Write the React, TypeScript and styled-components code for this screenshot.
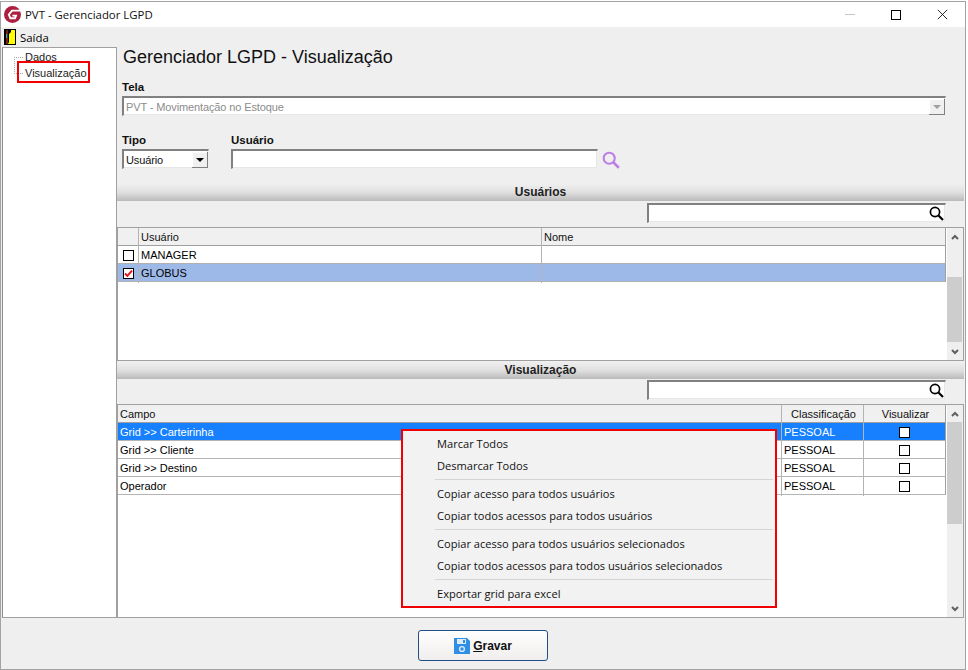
import React, { FC } from 'react'
import styled, { createGlobalStyle } from 'styled-components'

const GlobalStyle = createGlobalStyle`
  html, body {
    margin: 0;
    padding: 0;
    background: #fff;
  }
  body {
    font-family: "Liberation Sans", Arial, sans-serif;
    font-size: 11px;
    color: #000;
  }
  * {
    box-sizing: border-box;
  }
`

const menuGroups = [
  ['Marcar Todos', 'Desmarcar Todos'],
  ['Copiar acesso para todos usuários', 'Copiar todos acessos para todos usuários'],
  ['Copiar acesso para todos usuários selecionados', 'Copiar todos acessos para todos usuários selecionados'],
  ['Exportar grid para excel'],
]

const users = [
  { login: 'MANAGER', checked: false, selected: false },
  { login: 'GLOBUS', checked: true, selected: true },
]

const fields = ['Grid >> Carteirinha', 'Grid >> Cliente', 'Grid >> Destino', 'Operador']

const Logo: FC = () => (
  <svg width="17" height="17" viewBox="0 0 17 17">
    <circle cx="8.5" cy="8.5" r="8.5" fill="#ad1f3e" />
    <path d="M17 4.6H8L4.8 8.6l1.6 3.6H11l1-2.6H8.4" fill="none" stroke="#fff" strokeWidth="1.9" />
  </svg>
)

const DoorIcon: FC = () => (
  <svg width="12" height="16" viewBox="0 0 12 16">
    <rect width="12" height="16" fill="#000" />
    <rect x="4" y="1" width="7" height="14" fill="#ffff00" />
    <path d="M2 1h2v14H2z" fill="#7a1f1f" />
    <path d="M4 1h3v2l-2 2v8l-1 2z" fill="#000" />
    <rect x="2" y="5" width="1" height="4" fill="#19b5c8" />
  </svg>
)

const SearchGlyph: FC<{ color?: string; size?: number }> = ({ color = '#000', size = 15 }) => (
  <svg width={size} height={size} viewBox="0 0 15 15">
    <circle cx="6" cy="6" r="4.6" fill="none" stroke={color} strokeWidth="1.7" />
    <path d="M9.5 9.5L14 14" stroke={color} strokeWidth="2.2" />
  </svg>
)

const Chevron: FC<{ up?: boolean }> = ({ up }) => (
  <svg width="8" height="6" viewBox="0 0 8 6">
    <path d={up ? 'M1 5l3-3 3 3' : 'M1 1l3 3 3-3'} fill="none" stroke="#606060" strokeWidth="2" />
  </svg>
)

const FloppyIcon: FC = () => (
  <svg width="16" height="16" viewBox="0 0 16 16">
    <path d="M0 0h13l3 3v13H0z" fill="#2f8fe6" />
    <rect x="3" y="1" width="9" height="5" fill="#dfeaf5" />
    <rect x="9" y="2" width="2" height="3" fill="#2f8fe6" />
    <circle cx="8" cy="11" r="2.4" fill="none" stroke="#dfeaf5" strokeWidth="1.4" />
  </svg>
)

const Scrollbar: FC<{ before: number; thumb: number }> = ({ before, thumb }) => (
  <ScrollTrack>
    <ScrollArrow>
      <Chevron up />
    </ScrollArrow>
    <ScrollRail>
      <ScrollThumb $before={before} $thumb={thumb} />
    </ScrollRail>
    <ScrollArrow>
      <Chevron />
    </ScrollArrow>
  </ScrollTrack>
)

const SearchBar: FC<{ tight?: boolean }> = ({ tight }) => (
  <SearchRow $tight={tight}>
    <SearchField>
      <SearchGlyph />
    </SearchField>
  </SearchRow>
)

export default function App() {
  return (
    <>
      <GlobalStyle />
      <Window>
        <TitleBar>
          <Logo />
          <TitleText>PVT - Gerenciador LGPD</TitleText>
          <WindowButtons>
            <MinimizeButton />
            <MaximizeButton />
            <CloseButton>
              <svg width="13" height="13" viewBox="0 0 13 13">
                <path d="M1 1l11 11M12 1L1 12" stroke="#000" strokeWidth="1" />
              </svg>
            </CloseButton>
          </WindowButtons>
        </TitleBar>
        <MenuBar>
          <DoorIcon />
          <span>Saída</span>
        </MenuBar>
        <Body>
          <Tree>
            <TreeGuide />
            <TreeItem>Dados</TreeItem>
            <TreeItem $marked>Visualização</TreeItem>
          </Tree>
          <Main>
            <Heading>Gerenciador LGPD - Visualização</Heading>
            <Form>
              <FieldLabel>Tela</FieldLabel>
              <ComboBox $disabled>
                <span>PVT - Movimentação no Estoque</span>
                <ComboButton $disabled />
              </ComboBox>
              <FilterRow>
                <FilterColumn>
                  <FieldLabel>Tipo</FieldLabel>
                  <TypeCombo>
                    <span>Usuário</span>
                    <ComboButton />
                  </TypeCombo>
                </FilterColumn>
                <FilterColumn>
                  <FieldLabel>Usuário</FieldLabel>
                  <UserLookup>
                    <UserInput />
                    <LookupIcon>
                      <SearchGlyph color="#bd7de6" size={18} />
                    </LookupIcon>
                  </UserLookup>
                </FilterColumn>
              </FilterRow>
            </Form>

            <SectionBar>Usuários</SectionBar>
            <SearchBar />
            <Grid $height={134}>
              <GridColumn>
                <UserHeader>
                  <HeaderCell />
                  <HeaderCell>Usuário</HeaderCell>
                  <HeaderCell>Nome</HeaderCell>
                </UserHeader>
                {users.map(user => (
                  <UserRow key={user.login} $selected={user.selected}>
                    <CheckCell>
                      <CheckBox>
                        {user.checked && (
                          <svg width="9" height="9" viewBox="0 0 9 9">
                            <path d="M1 4.5l2.4 2.4L8 1.6" fill="none" stroke="#e0141c" strokeWidth="2" />
                          </svg>
                        )}
                      </CheckBox>
                    </CheckCell>
                    <BodyCell>{user.login}</BodyCell>
                    <BodyCell />
                  </UserRow>
                ))}
              </GridColumn>
              <Scrollbar before={32} thumb={65} />
            </Grid>

            <SectionBar>Visualização</SectionBar>
            <SearchBar tight />
            <Grid $height={214}>
              <GridColumn>
                <FieldHeader>
                  <HeaderCell>Campo</HeaderCell>
                  <HeaderCell $center>Classificação</HeaderCell>
                  <HeaderCell $center>Visualizar</HeaderCell>
                </FieldHeader>
                {fields.map((field, index) => (
                  <FieldRow key={field} $active={index === 0}>
                    <BodyCell>{field}</BodyCell>
                    <BodyCell>PESSOAL</BodyCell>
                    <CheckCell>
                      <CheckBox />
                    </CheckCell>
                  </FieldRow>
                ))}
              </GridColumn>
              <Scrollbar before={0} thumb={102} />
            </Grid>
          </Main>
        </Body>
        <Footer>
          <SaveButton>
            <FloppyIcon />
            <span>
              <u>G</u>ravar
            </span>
          </SaveButton>
        </Footer>
        <ContextMenu>
          {menuGroups.map(group => (
            <MenuGroup key={group[0]}>
              {group.map(item => (
                <MenuEntry key={item}>{item}</MenuEntry>
              ))}
            </MenuGroup>
          ))}
        </ContextMenu>
      </Window>
    </>
  )
}

const Window = styled.div`
  position: relative;
  width: 966px;
  height: 669px;
  margin-top: 1px;
  border: 1px solid #a3a3a3;
  background: #efefef;
  display: flex;
  flex-direction: column;
  overflow: hidden;
`

const TitleBar = styled.div`
  height: 25px;
  background: #fff;
  display: flex;
  align-items: center;
  padding-left: 3px;
  flex: none;
`

const TitleText = styled.div`
  margin-left: 4px;
  font-family: "Open Sans", "Liberation Sans", sans-serif;
  font-size: 11.4px;
  color: #111;
`

const WindowButtons = styled.div`
  margin-left: auto;
  display: flex;
  align-items: center;
  padding-right: 17px;
  gap: 36px;
`

const MinimizeButton = styled.div`
  width: 10px;
  height: 1px;
  background: #c6c6c6;
`

const MaximizeButton = styled.div`
  width: 10px;
  height: 10px;
  border: 1px solid #000;
`

const CloseButton = styled.div`
  width: 11px;
  height: 11px;
  display: flex;
  align-items: center;
  justify-content: center;
`

const MenuBar = styled.div`
  height: 20px;
  flex: none;
  display: flex;
  align-items: center;
  gap: 4px;
  padding-left: 3px;
  font-family: "Open Sans", "Liberation Sans", sans-serif;
  font-size: 11.4px;
`

const Body = styled.div`
  display: flex;
  height: 571px;
  flex: none;
  padding-left: 1px;
`

const Tree = styled.div`
  position: relative;
  width: 115px;
  flex: none;
  background: #fff;
  border: 1px solid #a0a0a0;
  border-left-color: #8c8c8c;
  padding: 1px 0 0 22px;
`

const TreeGuide = styled.div`
  position: absolute;
  left: 11px;
  top: 9px;
  width: 9px;
  height: 17px;
  border-left: 1px dotted #a8a8a8;
  border-top: 1px dotted #a8a8a8;
  border-bottom: 1px dotted #a8a8a8;
`

const TreeItem = styled.div<{ $marked?: boolean }>`
  position: relative;
  height: 16px;
  line-height: 16px;
  font-size: 11px;
  color: #222;
  &::after {
    content: '';
    box-sizing: border-box;
    display: ${({ $marked }) => ($marked ? 'block' : 'none')};
    position: absolute;
    left: -8px;
    top: -4px;
    width: 73px;
    height: 22px;
    border: 2px solid #f00000;
  }
`

const Main = styled.div`
  width: 847px;
  flex: none;
  display: flex;
  flex-direction: column;
`

const Heading = styled.div`
  height: 32px;
  flex: none;
  padding: 0 0 0 6px;
  font-size: 18px;
  line-height: 20px;
  color: #111;
`

const Form = styled.div`
  padding: 1px 0 0 5px;
  height: 104px;
  flex: none;
`

const FieldLabel = styled.div`
  height: 14px;
  line-height: 15px;
  font-weight: 700;
  font-size: 11.5px;
  color: #111;
  margin-bottom: 2px;
`

const sunkenField = `
  background: #fff;
  border: 1px solid #f0f0f0;
  border-top: 2px solid #808080;
  border-left: 2px solid #808080;
  box-shadow: inset -1px -1px 0 #e6e6e6;
`

const ComboBox = styled.div<{ $disabled?: boolean }>`
  ${sunkenField}
  width: 824px;
  height: 20px;
  display: flex;
  align-items: center;
  justify-content: space-between;
  padding-left: 2px;
  color: ${({ $disabled }) => ($disabled ? '#8c8c8c' : '#111')};
  font-size: 11px;
  letter-spacing: -0.12px;
`

const ComboButton = styled.div<{ $disabled?: boolean }>`
  width: 16px;
  height: 16px;
  background: #f0f0f0;
  border-right: 1px solid #808080;
  border-bottom: 1px solid #808080;
  box-shadow: inset 1px 1px 0 #fff;
  position: relative;
  &::after {
    content: '';
    position: absolute;
    left: 4px;
    top: 6px;
    border-left: 4px solid transparent;
    border-right: 4px solid transparent;
    border-top: 4px solid ${({ $disabled }) => ($disabled ? '#a0a0a0' : '#000')};
  }
`

const FilterRow = styled.div`
  display: flex;
  gap: 22px;
  margin-top: 17px;
`

const FilterColumn = styled.div`
  display: flex;
  flex-direction: column;
`

const TypeCombo = styled(ComboBox)`
  width: 87px;
  color: #111;
`

const UserLookup = styled.div`
  display: flex;
  align-items: center;
  gap: 4px;
`

const LookupIcon = styled.div`
  display: flex;
  padding-top: 2px;
`

const UserInput = styled.div`
  ${sunkenField}
  width: 367px;
  height: 20px;
`

const SectionBar = styled.div`
  height: 18px;
  flex: none;
  background: linear-gradient(#f1f1f1 0%, #dedede 55%, #b9b9b9 100%);
  text-align: center;
  font-weight: 700;
  font-size: 12px;
  line-height: 18px;
  color: #222;
`

const SearchRow = styled.div<{ $tight?: boolean }>`
  height: ${({ $tight }) => ($tight ? 25 : 26)}px;
  flex: none;
  display: flex;
  justify-content: flex-end;
  padding: ${({ $tight }) => ($tight ? 1 : 2)}px 18px 0 0;
`

const SearchField = styled.div`
  ${sunkenField}
  width: 299px;
  height: 20px;
  display: flex;
  align-items: center;
  justify-content: flex-end;
  padding-right: 1px;
`

const Grid = styled.div<{ $height: number }>`
  height: ${({ $height }) => $height}px;
  flex: none;
  display: flex;
  background: #fff;
  border: 1px solid #a0a0a0;
`

const GridColumn = styled.div`
  width: 828px;
  flex: none;
`

const UserHeader = styled.div`
  display: grid;
  grid-template-columns: 21px 403px 1fr;
  height: 18px;
  background: #f0f0f0;
  border-bottom: 1px solid #a0a0a0;
`

const FieldHeader = styled(UserHeader)`
  grid-template-columns: 664px 82px 1fr;
`

const HeaderCell = styled.div<{ $center?: boolean }>`
  padding-left: 2px;
  line-height: 19px;
  font-size: 11px;
  color: #111;
  text-align: ${({ $center }) => ($center ? 'center' : 'left')};
  border-right: 1px solid #b4b4b4;
  &:last-child {
    border-right: 1px solid #a0a0a0;
  }
`

const UserRow = styled.div<{ $selected?: boolean }>`
  display: grid;
  grid-template-columns: 21px 403px 1fr;
  height: 18px;
  background: ${({ $selected }) => ($selected ? '#9db9e8' : '#fff')};
  border-bottom: 1px solid #b0b0b0;
  border-right: 1px solid #a0a0a0;
`

const FieldRow = styled.div<{ $active?: boolean }>`
  display: grid;
  grid-template-columns: 664px 82px 1fr;
  height: 18px;
  background: ${({ $active }) => ($active ? '#1680ff' : '#fff')};
  color: ${({ $active }) => ($active ? '#fff' : '#000')};
  border-bottom: 1px solid #b4b4b4;
  border-right: 1px solid #a0a0a0;
`

const BodyCell = styled.div`
  padding-left: 2px;
  line-height: 19px;
  font-size: 11px;
  border-right: 1px solid #b4b4b4;
  &:last-child {
    border-right: 0;
  }
`

const CheckCell = styled(BodyCell)`
  padding-left: 0;
  display: flex;
  align-items: center;
  justify-content: center;
`

const CheckBox = styled.div`
  width: 11px;
  height: 11px;
  background: #fff;
  border: 1px solid #000;
  display: flex;
  align-items: center;
  justify-content: center;
`

const ScrollTrack = styled.div`
  width: 16px;
  flex: none;
  margin-left: 1px;
  display: flex;
  flex-direction: column;
  background: #efefef;
`

const ScrollArrow = styled.div`
  height: 17px;
  flex: none;
  display: flex;
  align-items: center;
  justify-content: center;
`

const ScrollRail = styled.div`
  flex: 1;
`

const ScrollThumb = styled.div<{ $before: number; $thumb: number }>`
  margin: ${({ $before }) => $before}px 1px 0 0;
  height: ${({ $thumb }) => $thumb}px;
  background: #cdcdcd;
`

const Footer = styled.div`
  flex: 1;
  display: flex;
  justify-content: center;
  padding-top: 12px;
`

const SaveButton = styled.div`
  width: 130px;
  height: 31px;
  border: 1px solid #1f4f86;
  border-radius: 3px;
  background: linear-gradient(#ffffff, #f0eeec);
  display: flex;
  align-items: center;
  justify-content: center;
  gap: 3px;
  font-weight: 700;
  font-size: 12px;
  color: #111;
`

const ContextMenu = styled.div`
  position: absolute;
  left: 400px;
  top: 427px;
  width: 376px;
  height: 179px;
  background: #f2f2f2;
  border: 2px solid #f00000;
  padding: 2px 2px 0 32px;
  font-family: "Open Sans", "Liberation Sans", sans-serif;
  font-size: 11.1px;
  color: #111;
`

const MenuGroup = styled.div`
  padding-bottom: 2px;
  margin-bottom: 3px;
  border-bottom: 1px solid #d4d4d4;
  &:last-child {
    border-bottom: 0;
  }
`

const MenuEntry = styled.div`
  height: 22px;
  line-height: 22px;
  padding-left: 2px;
`
